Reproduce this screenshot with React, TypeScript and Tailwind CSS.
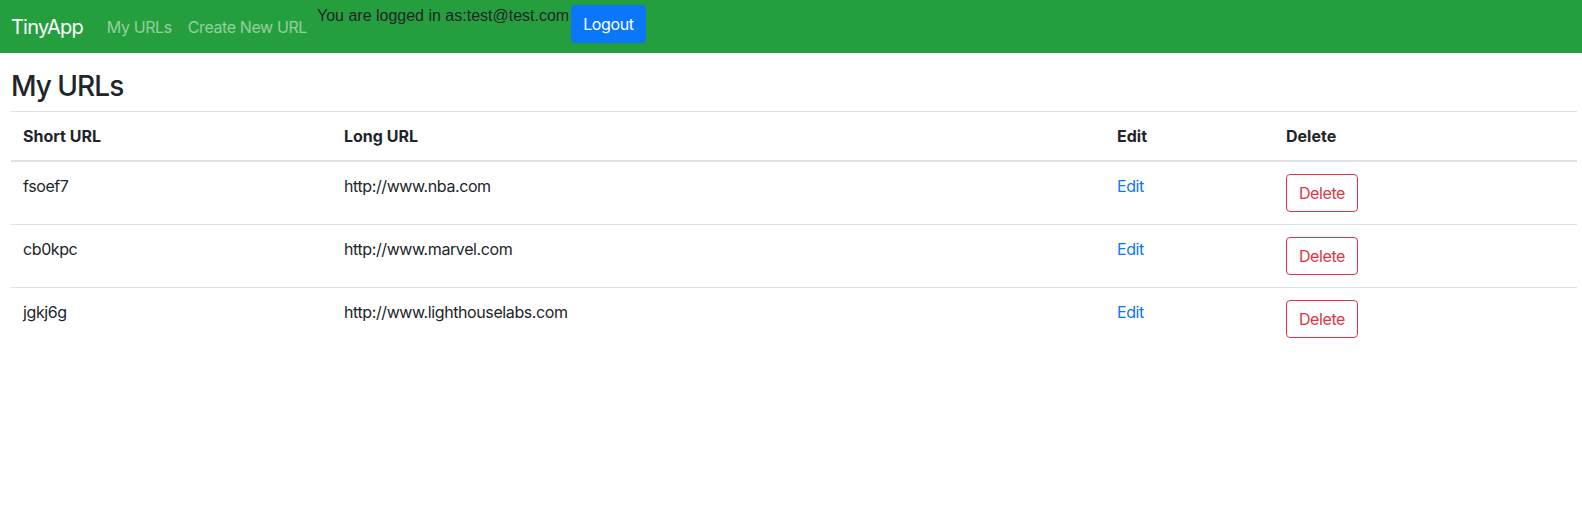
const urls = [
  { id: 'fsoef7', long: 'http://www.nba.com' },
  { id: 'cb0kpc', long: 'http://www.marvel.com' },
  { id: 'jgkj6g', long: 'http://www.lighthouselabs.com' },
];

export default function App() {
  return (
    <div className="min-h-[513px] bg-white text-[#212529] font-['Inter','Noto_Sans',sans-serif] text-[16px] tracking-[-0.025em]">
      {/* Navbar */}
      <nav className="flex items-center h-[53px] pl-[11px] bg-[#259f3e]">
        <a href="#" className="text-[20px] leading-[30px] tracking-[-0.04em] text-white mr-[16px]">
          TinyApp
        </a>
        <a href="#" className="px-[8px] leading-6 text-white/50">
          My URLs
        </a>
        <a href="#" className="px-[8px] leading-6 text-white/50">
          Create New URL
        </a>
        <span className="self-start mt-[4px] ml-[2px] leading-6 tracking-normal text-[#212529] font-['Liberation_Sans',Arial,sans-serif]">
          You are logged in as:test@test.com
        </span>
        <button className="self-start mt-[5px] ml-[2px] h-[38px] px-[12px] rounded-[4px] bg-[#0a77fb] text-white leading-6">
          Logout
        </button>
      </nav>

      {/* Content */}
      <div className="pl-[11px] pt-[16px]">
        <h3 className="text-[28px] leading-[34px] font-medium tracking-[-0.035em] mb-[8px]">My URLs</h3>
        <table className="w-[1566px] border-collapse text-left">
          <thead>
            <tr className="border-t border-[#dee2e6]">
              <th className="w-[321px] p-[12px] leading-6 font-bold tracking-normal border-b-2 border-[#dee2e6]">Short URL</th>
              <th className="w-[773px] p-[12px] leading-6 font-bold tracking-normal border-b-2 border-[#dee2e6]">Long URL</th>
              <th className="w-[169px] p-[12px] leading-6 font-bold tracking-normal border-b-2 border-[#dee2e6]">Edit</th>
              <th className="p-[12px] leading-6 font-bold tracking-normal border-b-2 border-[#dee2e6]">Delete</th>
            </tr>
          </thead>
          <tbody>
            {urls.map((u, i) => (
              <tr key={u.id} className={i > 0 ? 'border-t border-[#dee2e6]' : ''}>
                <td className="p-[12px] align-top leading-6">{u.id}</td>
                <td className="p-[12px] align-top leading-6">{u.long}</td>
                <td className="p-[12px] align-top leading-6">
                  <a href="#" className="text-[#0a77fb]">Edit</a>
                </td>
                <td className="p-[12px] align-top leading-6">
                  <button className="h-[38px] w-[72px] rounded-[4px] border border-[#dc3545] text-[#dc3545] leading-6">
                    Delete
                  </button>
                </td>
              </tr>
            ))}
          </tbody>
        </table>
      </div>
    </div>
  );
}
